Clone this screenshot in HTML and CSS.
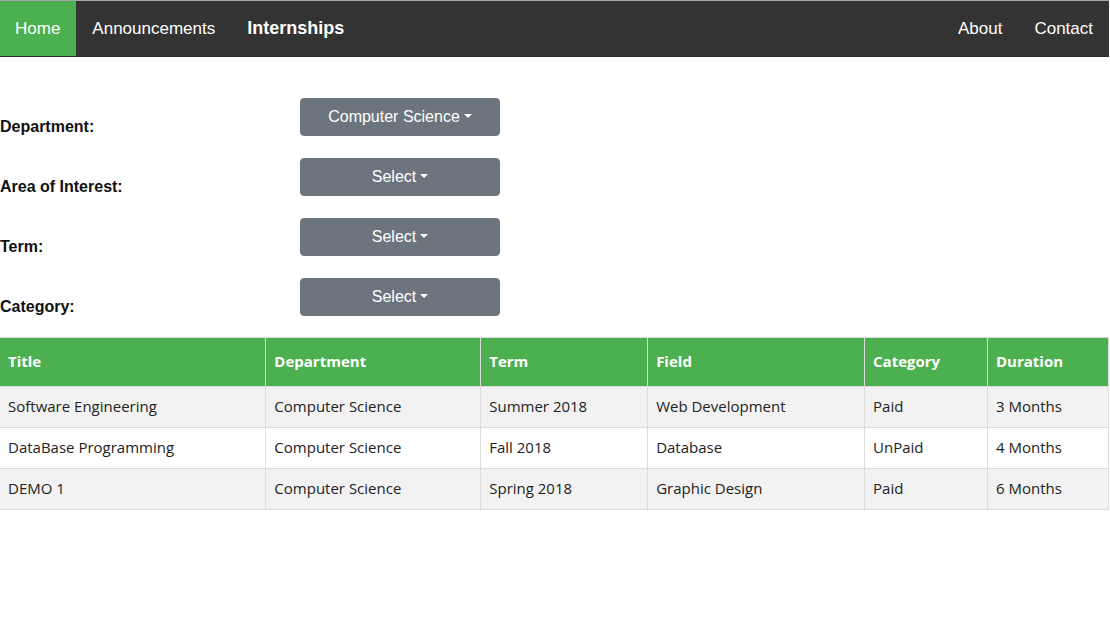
FILE: index.html
```html
<!DOCTYPE html>
<html>
<head>
<meta charset="utf-8">
<link rel="stylesheet" href="styles.css">
</head>
<body>
<div class="page">
  <nav class="topnav">
    <a class="nav-link active" href="#">Home</a>
    <a class="nav-link" href="#">Announcements</a>
    <a class="nav-brand" href="#">Internships</a>
    <div class="nav-right">
      <a class="nav-link" href="#">About</a>
      <a class="nav-link" href="#">Contact</a>
    </div>
  </nav>

  <form class="filters">
    <div class="filter-row">
      <label class="filter-label">Department:</label>
      <button type="button" class="dropdown-btn">Computer Science</button>
    </div>
    <div class="filter-row">
      <label class="filter-label">Area of Interest:</label>
      <button type="button" class="dropdown-btn">Select</button>
    </div>
    <div class="filter-row">
      <label class="filter-label">Term:</label>
      <button type="button" class="dropdown-btn">Select</button>
    </div>
    <div class="filter-row">
      <label class="filter-label">Category:</label>
      <button type="button" class="dropdown-btn">Select</button>
    </div>
  </form>

  <table class="results">
    <colgroup>
      <col class="c1"><col class="c2"><col class="c3"><col class="c4"><col class="c5"><col class="c6">
    </colgroup>
    <thead>
      <tr><th>Title</th><th>Department</th><th>Term</th><th>Field</th><th>Category</th><th>Duration</th></tr>
    </thead>
    <tbody>
      <tr><td>Software Engineering</td><td>Computer Science</td><td>Summer 2018</td><td>Web Development</td><td>Paid</td><td>3 Months</td></tr>
      <tr><td>DataBase Programming</td><td>Computer Science</td><td>Fall 2018</td><td>Database</td><td>UnPaid</td><td>4 Months</td></tr>
      <tr><td>DEMO 1</td><td>Computer Science</td><td>Spring 2018</td><td>Graphic Design</td><td>Paid</td><td>6 Months</td></tr>
    </tbody>
  </table>
</div>
</body>
</html>
```

FILE: styles.css
```css
* { box-sizing: border-box; }
html, body { margin: 0; padding: 0; background: #fff; }
body { font-family: "Liberation Sans", Arial, sans-serif; }

.page {
  width: 1109px;
  border-top: 1px solid #a6a6a6;
}

.topnav {
  display: flex;
  align-items: stretch;
  height: 56px;
  background: #333;
  border-bottom: 1px solid #2b2b2b;
}
.nav-link, .nav-brand {
  display: flex;
  align-items: center;
  color: #fff;
  text-decoration: none;
  font-size: 17px;
  padding: 0 16px;
}
.nav-link.active { background: #4caf50; padding: 0 16px 0 15px; }
.nav-brand {
  font-weight: bold;
  font-size: 18px;
  padding-left: 16px;
}
.nav-right { display: flex; margin-left: auto; }

.filters {
  padding-top: 41px;
  display: flex;
  flex-direction: column;
  gap: 22px;
}
.filter-row {
  display: flex;
  height: 38px;
}
.filter-label {
  width: 300px;
  font-weight: bold;
  font-size: 16px;
  line-height: 18px;
  color: #111;
  align-self: flex-end;
}
.dropdown-btn {
  width: 200px;
  height: 38px;
  background: #6c757d;
  border: 1px solid #6c757d;
  border-radius: 4px;
  color: #fff;
  font-family: "Liberation Sans", Arial, sans-serif;
  font-size: 16px;
  line-height: 18px;
  padding: 0 12px;
  align-self: flex-start;
}
.dropdown-btn::after {
  content: "";
  display: inline-block;
  margin-left: 4px;
  vertical-align: 4px;
  border-top: 4.5px solid #fff;
  border-left: 4.5px solid transparent;
  border-right: 4.5px solid transparent;
}

.results {
  margin-top: 21px;
  width: 1109px;
  border-collapse: collapse;
  font-family: "Open Sans", "DejaVu Sans", sans-serif;
  font-size: 15px;
  color: #222;
}
.c1 { width: 266px; }
.c2 { width: 215px; }
.c3 { width: 167px; }
.c4 { width: 217px; }
.c5 { width: 123px; }
.c6 { width: 121px; }
.results th, .results td {
  text-align: left;
  border: 1px solid #ddd;
  padding: 0 8px;
}
.results th:first-child, .results td:first-child { border-left: 0; }
.results th {
  background: #4caf50;
  color: #fff;
  font-weight: bold;
  height: 49px;
  padding-bottom: 2px;
}
.results td { height: 41px; padding-bottom: 3px; }
.results tbody tr:nth-child(odd) { background: #f2f2f2; }
.results tbody tr:nth-child(even) { background: #fff; }
```
